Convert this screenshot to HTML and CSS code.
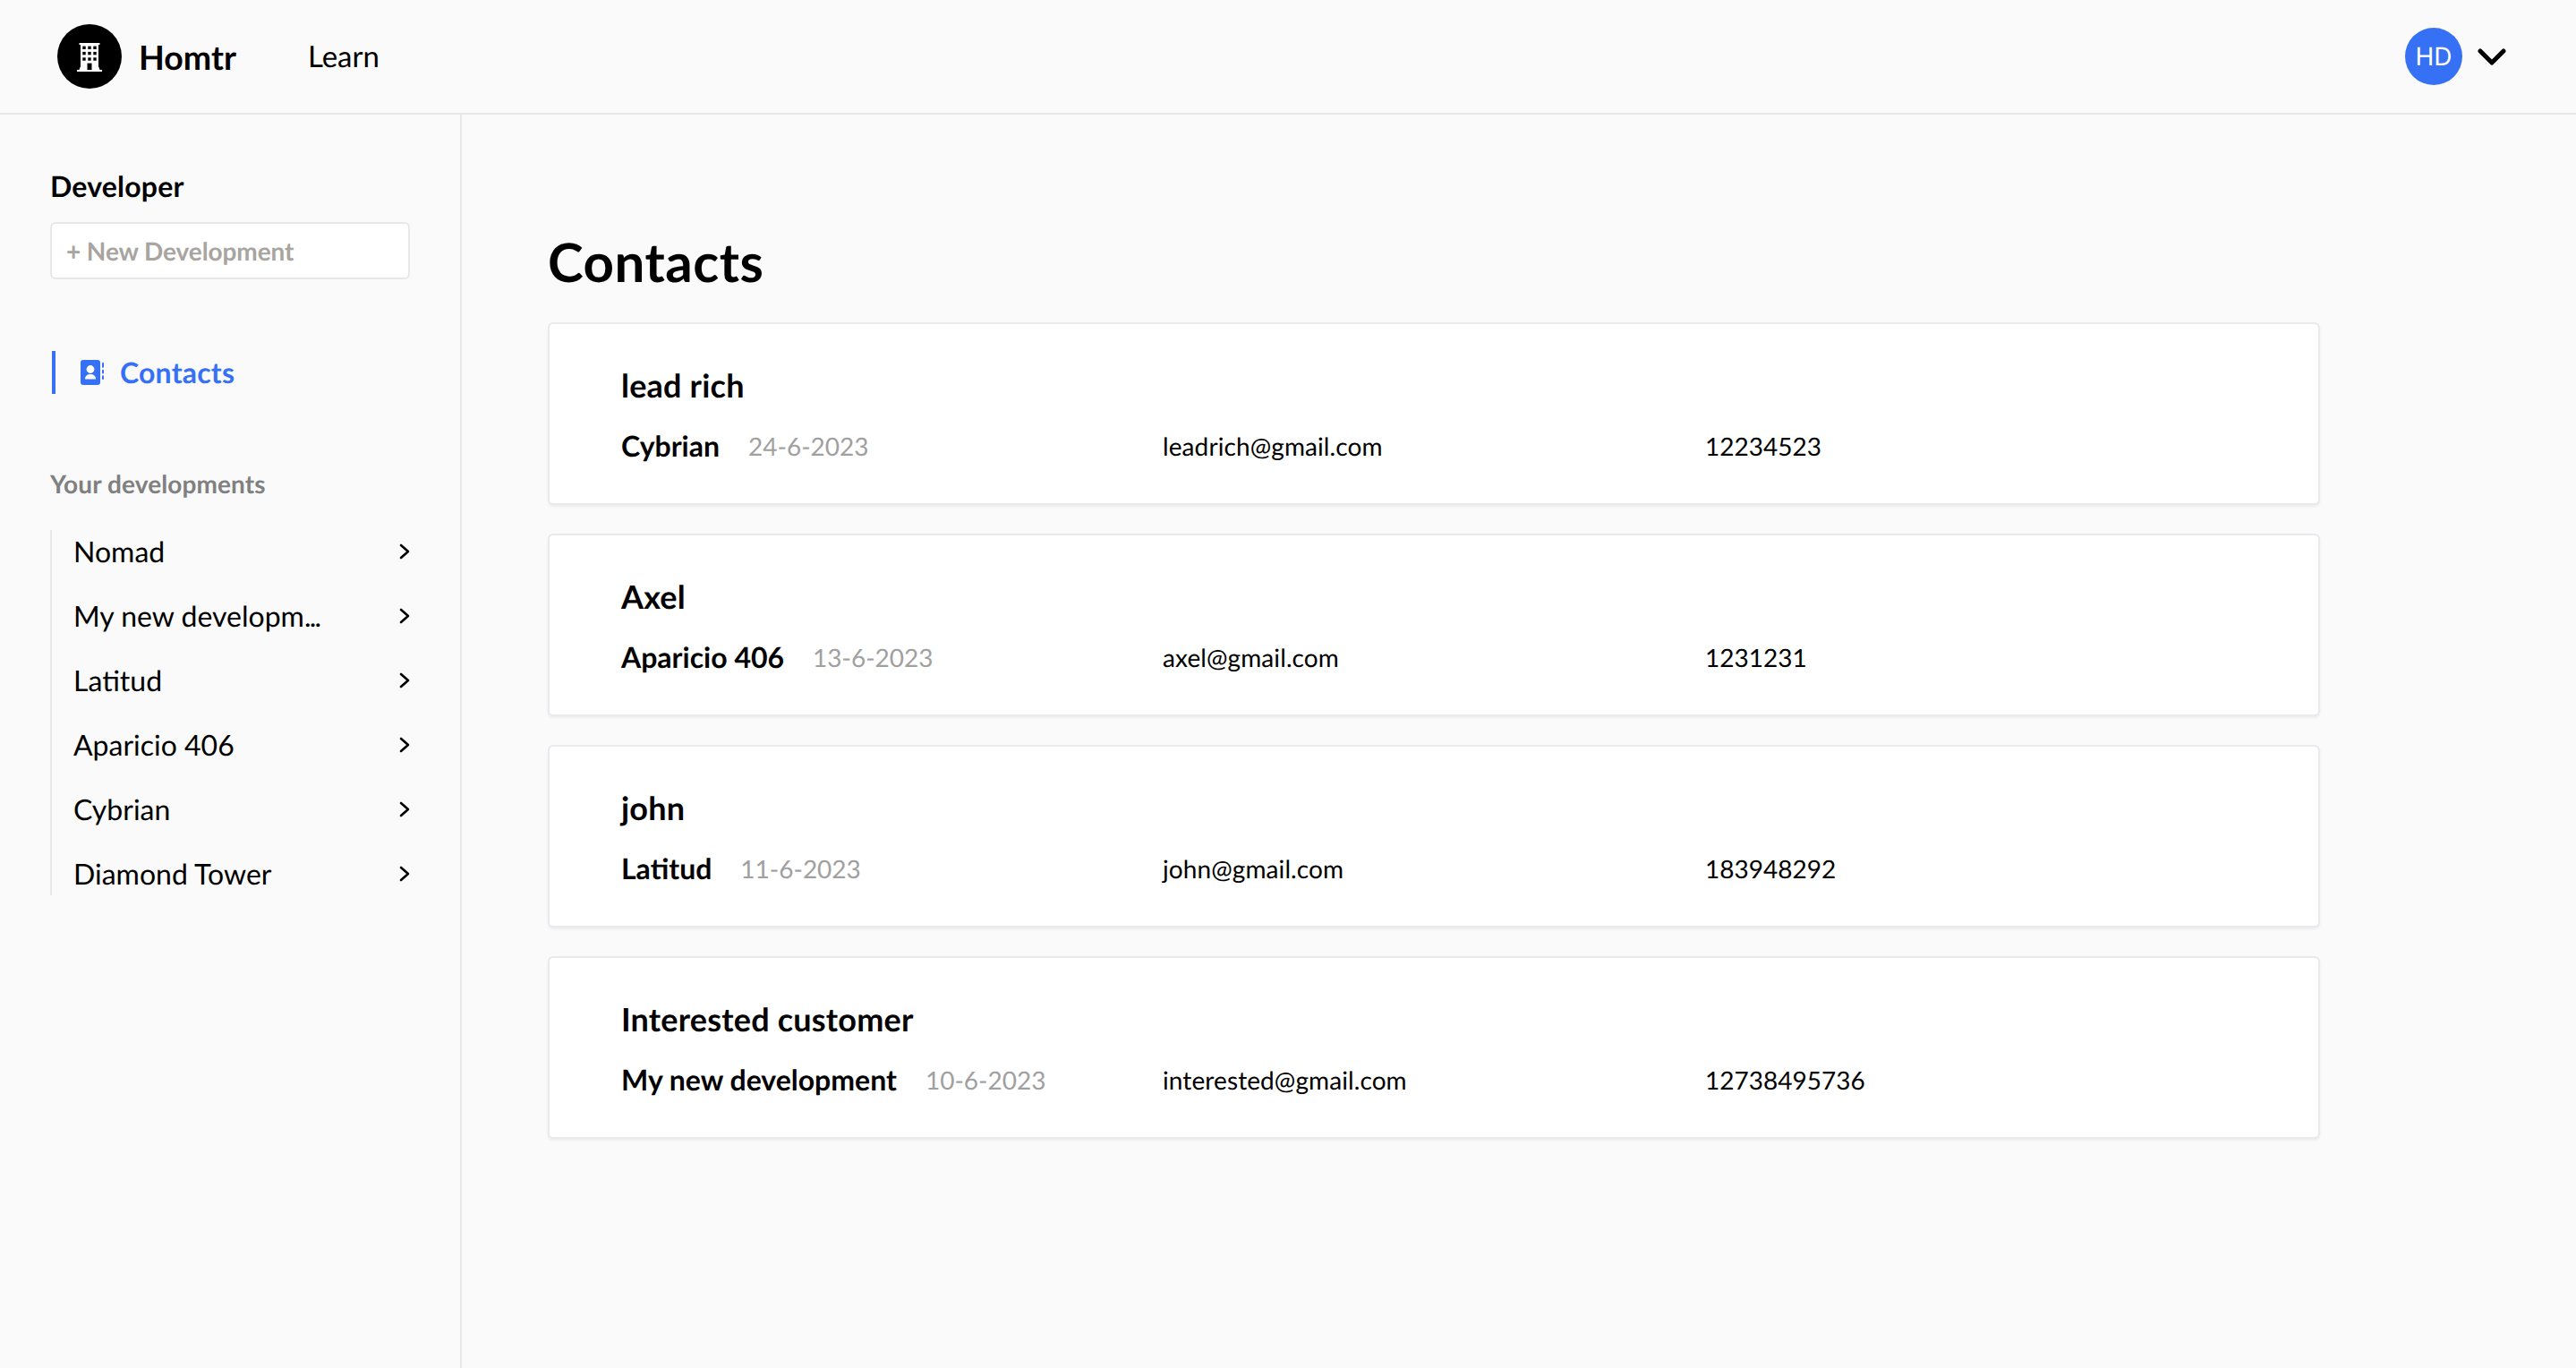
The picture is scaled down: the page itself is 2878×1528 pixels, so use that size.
FILE: index.html
```html
<!DOCTYPE html>
<html lang="en">
<head>
<meta charset="utf-8">
<title>Homtr</title>
<link rel="stylesheet" href="styles.css">
</head>
<body>
<header class="topbar">
  <div class="brand">
    <span class="logo">
      <svg viewBox="0 -2 28 34" width="28" height="34"><path fill="#fff" d="M2.500 0H25.500V2H24L24 26l1.500 4H28v2H0v-2h2.500L4 26V2H2.500z"/><g fill="#000"><rect x="6.300" y="3.600" width="3.400" height="3.400"/><rect x="12.300" y="3.600" width="3.400" height="3.400"/><rect x="18.300" y="3.600" width="3.400" height="3.400"/><rect x="6.300" y="9.900" width="3.400" height="3.400"/><rect x="12.300" y="9.900" width="3.400" height="3.400"/><rect x="18.300" y="9.900" width="3.400" height="3.400"/><rect x="6.300" y="16.300" width="3.400" height="3.400"/><rect x="12.300" y="16.300" width="3.400" height="3.400"/><rect x="18.300" y="16.300" width="3.400" height="3.400"/><rect x="11.500" y="22.600" width="5" height="7.400"/></g></svg>
    </span>
    <span class="brand-name">Homtr</span>
    <a class="nav-link">Learn</a>
  </div>
  <div class="user">
    <span class="avatar">HD</span>
    <svg class="user-caret" viewBox="0 0 32 20" width="32" height="20"><path d="M3 3l13 13L29 3" fill="none" stroke="#000" stroke-width="5" stroke-linecap="round" stroke-linejoin="round"/></svg>
  </div>
</header>
<div class="layout">
  <aside class="sidebar">
    <div class="side-title">Developer</div>
    <button class="new-btn">+ New Development</button>
    <a class="side-active">
      <svg viewBox="0 0 26 28" width="26" height="28"><rect x="0" y="0" width="22" height="28" rx="3" fill="#3671f5"/><rect x="24" y="2.700" width="2" height="6" rx="1" fill="#3671f5"/><rect x="24" y="10.700" width="2" height="4.800" rx="1" fill="#3671f5"/><rect x="24" y="17.300" width="2" height="4.800" rx="1" fill="#3671f5"/><circle cx="11" cy="10.500" r="4.400" fill="#fff"/><path d="M5 21.500c0-3.600 2.600-5.500 6-5.500s6 1.900 6 5.500z" fill="#fff"/></svg>
      <span class="side-label">Contacts</span>
    </a>
    <div class="side-sub">Your developments</div>
    <ul class="dev-list">
      <li class="dev-item"><span class="dev-label">Nomad</span><svg class="chev" viewBox="0 0 12 18" width="12" height="18"><path d="M2 2l8 7-8 7" fill="none" stroke="#000" stroke-width="2.600" stroke-linecap="round" stroke-linejoin="round"/></svg></li>
      <li class="dev-item"><span class="dev-label">My new developm<span class="dots">...</span></span><svg class="chev" viewBox="0 0 12 18" width="12" height="18"><path d="M2 2l8 7-8 7" fill="none" stroke="#000" stroke-width="2.600" stroke-linecap="round" stroke-linejoin="round"/></svg></li>
      <li class="dev-item"><span class="dev-label">Latitud</span><svg class="chev" viewBox="0 0 12 18" width="12" height="18"><path d="M2 2l8 7-8 7" fill="none" stroke="#000" stroke-width="2.600" stroke-linecap="round" stroke-linejoin="round"/></svg></li>
      <li class="dev-item"><span class="dev-label">Aparicio 406</span><svg class="chev" viewBox="0 0 12 18" width="12" height="18"><path d="M2 2l8 7-8 7" fill="none" stroke="#000" stroke-width="2.600" stroke-linecap="round" stroke-linejoin="round"/></svg></li>
      <li class="dev-item"><span class="dev-label">Cybrian</span><svg class="chev" viewBox="0 0 12 18" width="12" height="18"><path d="M2 2l8 7-8 7" fill="none" stroke="#000" stroke-width="2.600" stroke-linecap="round" stroke-linejoin="round"/></svg></li>
      <li class="dev-item"><span class="dev-label">Diamond Tower</span><svg class="chev" viewBox="0 0 12 18" width="12" height="18"><path d="M2 2l8 7-8 7" fill="none" stroke="#000" stroke-width="2.600" stroke-linecap="round" stroke-linejoin="round"/></svg></li>
    </ul>
  </aside>
  <main class="main">
    <h1 class="page-title">Contacts</h1>
    <section class="card">
      <div class="card-name">lead rich</div>
      <div class="card-row"><div class="dev"><b>Cybrian</b><span class="date">24-6-2023</span></div><div class="email">leadrich@gmail.com</div><div>12234523</div></div>
    </section>
    <section class="card">
      <div class="card-name">Axel</div>
      <div class="card-row"><div class="dev"><b>Aparicio 406</b><span class="date">13-6-2023</span></div><div class="email">axel@gmail.com</div><div>1231231</div></div>
    </section>
    <section class="card">
      <div class="card-name">john</div>
      <div class="card-row"><div class="dev"><b>Latitud</b><span class="date">11-6-2023</span></div><div class="email">john@gmail.com</div><div>183948292</div></div>
    </section>
    <section class="card">
      <div class="card-name">Interested customer</div>
      <div class="card-row"><div class="dev"><b>My new development</b><span class="date">10-6-2023</span></div><div class="email">interested@gmail.com</div><div>12738495736</div></div>
    </section>
  </main>
</div>
</body>
</html>
```
FILE: styles.css
```css
* { box-sizing: border-box; }
html, body { margin: 0; height: 100%; }
body {
  font-family: Lato, "Open Sans", sans-serif;
  color: #000;
  background: #fafafa;
  display: flex;
  flex-direction: column;
  overflow: hidden;
  text-rendering: geometricPrecision;
}
.topbar {
  height: 128px;
  flex: none;
  border-bottom: 2px solid #e7e7ec;
  display: flex;
  align-items: center;
  justify-content: space-between;
  padding: 0 78px 0 64px;
}
.brand { display: flex; align-items: center; }
.logo {
  width: 72px;
  height: 72px;
  border-radius: 50%;
  background: #000;
  display: flex;
  align-items: center;
  justify-content: center;
}
.brand-name { font-size: 37.5px; font-weight: 700; margin-left: 19px; }
.nav-link { font-size: 33px; margin-left: 80px; }
.user { display: flex; align-items: center; gap: 17px; }
.user-caret { margin-top: 2px; }
.avatar {
  width: 64px;
  height: 64px;
  border-radius: 50%;
  background: #3671f5;
  color: #fff;
  font-family: Inter, sans-serif;
  font-size: 28px;
  display: flex;
  align-items: center;
  justify-content: center;
}
.layout { flex: 1; display: flex; min-height: 0; }
.sidebar {
  width: 516px;
  flex: none;
  border-right: 2px solid #e7e7ec;
  padding: 60px 56px 0;
}
.side-title { font-size: 32px; font-weight: 700; line-height: 40px; letter-spacing: .2px; }
.new-btn {
  display: block;
  width: 402px;
  height: 64px;
  margin-top: 20px;
  padding: 0 16px;
  background: #fff;
  border: 2px solid #e7e7ec;
  border-radius: 6px;
  font: 700 28px Lato, sans-serif;
  letter-spacing: -.1px;
  color: #a8a4a0;
  text-align: left;
  text-rendering: geometricPrecision;
}
.side-active {
  display: flex;
  align-items: center;
  height: 48px;
  margin: 80px 0 0 2px;
  padding-left: 28px;
  gap: 18px;
  border-left: 4px solid #3671f5;
  color: #3671f5;
  font-size: 32px;
  font-weight: 700;
  letter-spacing: .2px;
}
.side-label { margin-bottom: 2px; }
.side-sub {
  margin-top: 80px;
  font-size: 28px;
  line-height: 40px;
  font-weight: 700;
  letter-spacing: .1px;
  color: #808080;
}
.dev-list {
  list-style: none;
  margin: 32px 0 0;
  padding: 0 0 0 24px;
  border-left: 2px solid #e7e7ec;
  display: flex;
  flex-direction: column;
  gap: 24px;
}
.dev-item {
  height: 48px;
  display: flex;
  align-items: center;
  justify-content: space-between;
  font-size: 32px;
}
.dev-label { margin-bottom: 2px; }
.dots { letter-spacing: -1.8px; }
.main { flex: 1; padding: 128px 0 0 96px; }
.page-title { margin: 0 0 32px; font-size: 60px; line-height: 72px; font-weight: 700; letter-spacing: .5px; }
.card {
  width: 1980px;
  height: 204px;
  margin-bottom: 32px;
  padding: 46px 80px 0;
  background: #fff;
  border: 2px solid #e9e9ee;
  border-radius: 6px;
  box-shadow: 0 2px 3px rgba(0,0,0,.06);
}
.card-name { font-size: 36px; font-weight: 700; line-height: 44px; letter-spacing: .2px; }
.card-row {
  display: grid;
  grid-template-columns: 605px 606px 1fr;
  margin-top: 26px;
  font-size: 28px;
  line-height: 40px;
  align-items: center;
}
.email { letter-spacing: .1px; }
.dev { display: flex; align-items: center; gap: 32px; }
.dev b { font-size: 32px; font-weight: 700; }
.date { color: #a0a0a0; font-size: 28px; }
```
